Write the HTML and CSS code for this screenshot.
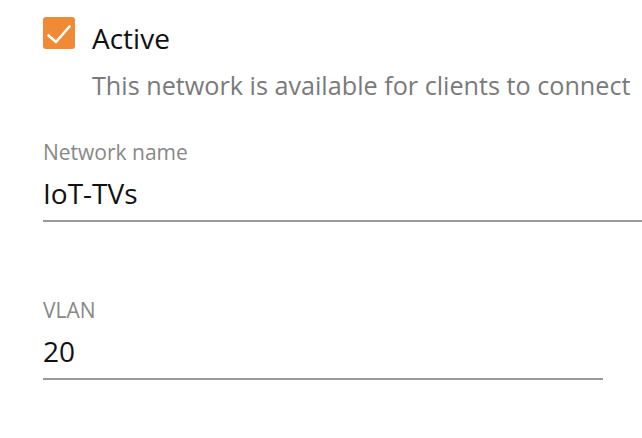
FILE: index.html
```html
<!DOCTYPE html>
<html lang="en">
  <head>
    <meta charset="UTF-8">
    <meta name="viewport" content="width=device-width, initial-scale=1.0">
    <title>Network settings</title>
    <link rel="stylesheet" href="styles.css">
  </head>
  <body>
    <form id="network-form">
      <div class="check-row">
        <span class="checkbox">
          <svg width="32" height="32" viewBox="0 0 32 32">
            <path d="M5.5 18.5 L13 25 L26.5 9.5" fill="none" stroke="#fff" stroke-width="2.6" stroke-linecap="round" stroke-linejoin="round"/>
          </svg>
        </span>
        <div class="check-text">
          <div class="check-label">Active</div>
          <div class="check-hint">This network is available for clients to connect</div>
        </div>
      </div>

      <div class="field field-wide">
        <div class="field-label">Network name</div>
        <div class="field-input">IoT-TVs</div>
      </div>

      <div class="field field-narrow">
        <div class="field-label">VLAN</div>
        <div class="field-input">20</div>
      </div>
    </form>
  </body>
</html>
```
FILE: styles.css
```css
body {
  font-family: "Open Sans", sans-serif;
  background-color: #fff;
  margin: 0;
  overflow: hidden;
}

#network-form {
  padding: 17px 0 0 43px;
}

.check-row {
  display: flex;
  align-items: flex-start;
  gap: 17px;
}

.checkbox {
  width: 32px;
  height: 32px;
  flex: none;
  border-radius: 3px;
  background-color: #f08a37;
}

.checkbox svg {
  display: block;
}

.check-label {
  font-size: 28px;
  line-height: 42px;
  color: #111;
}

.check-hint {
  margin-top: 9px;
  font-size: 25.2px;
  line-height: 34px;
  color: #7a7a7a;
  white-space: nowrap;
}

.field {
  margin-top: 39px;
}

.field + .field {
  margin-top: 77px;
}

.field-wide {
  width: 620px;
}

.field-narrow {
  width: 560px;
}

.field-label {
  font-size: 21px;
  line-height: 22px;
  color: #888;
}

.field-input {
  margin-top: 10px;
  padding-bottom: 7px;
  font-size: 28px;
  line-height: 40px;
  color: #111;
  border-bottom: 2px solid #999;
}
```
